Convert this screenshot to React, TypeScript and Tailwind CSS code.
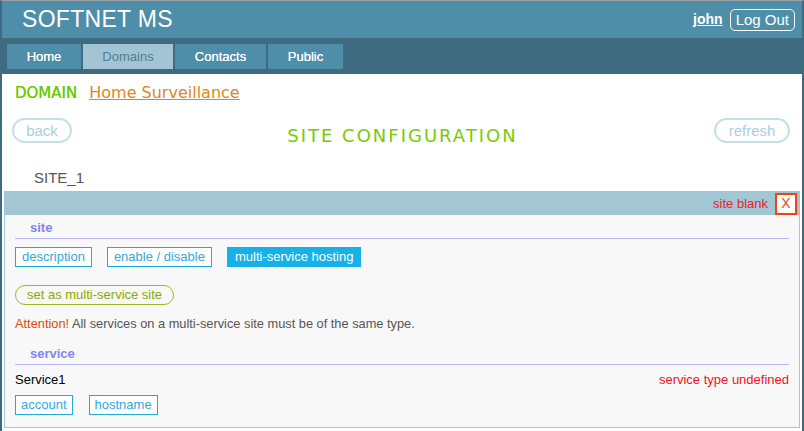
import React from 'react'

const tabs = ['Home', 'Domains', 'Contacts', 'Public']

const Tag = ({ label, active, tight }: { label: string; active?: boolean; tight?: boolean }) => (
    <span
        className={
            active
                ? 'inline-flex items-center h-[20px] px-[7px] border border-[#14b1ea] bg-[#14b1ea] text-white text-[13px]'
                : 'inline-flex items-center h-[20px] border border-[#22aadd] text-[#33a9dd] text-[13px] bg-white ' +
                  (tight ? 'px-[5px]' : 'px-[6px]')
        }
    >
        {label}
    </span>
)

const Section = ({ title }: { title: string }) => (
    <div className="border-b border-[#b5b5f2] pl-[15px] pb-[2px] text-[13px] leading-[16px] font-bold text-[#8585ee]">
        {title}
    </div>
)

const App = () => {
    return (
        <div className="w-[804px] h-[431px] overflow-hidden bg-white border-t border-t-[#9aa4a8] border-x-2 border-x-[#3e6b80] font-['Liberation_Sans',Arial,sans-serif]">
            {/* header */}
            <div className="h-[37px] bg-[#4f8ea8] flex items-center justify-between pl-[20px] pr-[7px]">
                <span className="text-white text-[23px] leading-none tracking-[0.3px]">SOFTNET MS</span>
                <div className="flex items-center gap-[7px]">
                    <a className="text-white text-[14px] font-bold underline">john</a>
                    <button className="text-white text-[15px] border border-white rounded-[5px] px-[5px] h-[22px] leading-none">Log Out</button>
                </div>
            </div>

            {/* nav */}
            <div className="h-[36px] bg-[#3e6b80] flex gap-[2px] pl-[5px] pt-[6px]">
                {tabs.map((t) => (
                    <div
                        key={t}
                        className={
                            t === 'Domains'
                                ? 'h-[25px] flex items-center justify-center bg-[#a3c5d3] text-[#4f7f94] text-[13px] w-[90px]'
                                : 'h-[25px] flex items-center justify-center bg-[#4f8ea8] text-white text-[13px] [text-shadow:0_0_0.4px_#fff] ' +
                                  (t === 'Home' ? 'w-[74px]' : t === 'Contacts' ? 'w-[91px]' : 'w-[75px]')
                        }
                    >
                        {t}
                    </div>
                ))}
            </div>

            {/* domain */}
            <div className="pl-[13px] pt-[9px] leading-[20px] flex font-['DejaVu_Sans',Verdana,sans-serif]">
                <span className="text-[15px] text-[#66cc00] [text-shadow:0_0_0.5px_#66cc00]">DOMAIN</span>
                <a className="ml-[12px] text-[16px] text-[#e0861c] underline">Home Surveillance</a>
            </div>

            {/* title row */}
            <div className="grid grid-cols-[1fr_auto_1fr] items-start pl-[10px] pr-[12px] pt-[15px]">
                <div>
                    <button className="h-[25px] w-[60px] rounded-full border-2 border-[#c2dfea] text-[#a9cfe0] text-[15px] leading-none">back</button>
                </div>
                <div className="pt-[7px] pl-[3px] leading-[22px] text-[18px] text-[#77cc00] tracking-[2px] font-['DejaVu_Sans',Verdana,sans-serif]">SITE CONFIGURATION</div>
                <div className="flex justify-end">
                    <button className="h-[25px] w-[76px] rounded-full border-2 border-[#c2dfea] text-[#a9cfe0] text-[15px] leading-none">refresh</button>
                </div>
            </div>

            <div className="pl-[32px] pt-[22px] text-[15px] text-[#555555] leading-[18px]">SITE_1</div>

            {/* panel */}
            <div className="mx-[2px] mt-[4px] border border-[#a3c6d4] bg-[#f8f8f8]">
                <div className="h-[23px] bg-[#a3c6d4] flex items-center justify-end gap-[7px] pr-[2px]">
                    <span className="text-[13px] text-[#ee2222]">site blank</span>
                    <span className="h-[22px] w-[22px] bg-white border-2 border-[#ee4411] text-[#ee4411] text-[14px] flex items-center justify-center">X</span>
                </div>

                <div className="px-[10px]">
                    <div className="pt-[5px]">
                        <Section title="site" />
                    </div>
                    <div className="flex gap-[15px] pt-[8px]">
                        <Tag label="description" />
                        <Tag label="enable / disable" />
                        <Tag label="multi-service hosting" active />
                    </div>
                    <div className="pt-[18px] flex">
                        <span className="inline-flex items-center h-[20px] px-[11px] rounded-full border border-[#99bb22] text-[#88aa00] text-[13px]">
                            set as multi-service site
                        </span>
                    </div>
                    <div className="pt-[11px] text-[12.8px] leading-[16px] text-[#555555]">
                        <span className="text-[#dd4a0a]">Attention!</span> All services on a multi-service site must be of the same type.
                    </div>
                    <div className="pt-[14px]">
                        <Section title="service" />
                    </div>
                    <div className="flex justify-between pt-[6px] text-[13px] leading-[17px]">
                        <span className="text-black">Service1</span>
                        <span className="text-[#ee1122]">service type undefined</span>
                    </div>
                    <div className="flex gap-[16px] pt-[7px] pb-[12px]">
                        <Tag label="account" tight />
                        <Tag label="hostname" tight />
                    </div>
                </div>
            </div>
        </div>
    )
}

export default App
